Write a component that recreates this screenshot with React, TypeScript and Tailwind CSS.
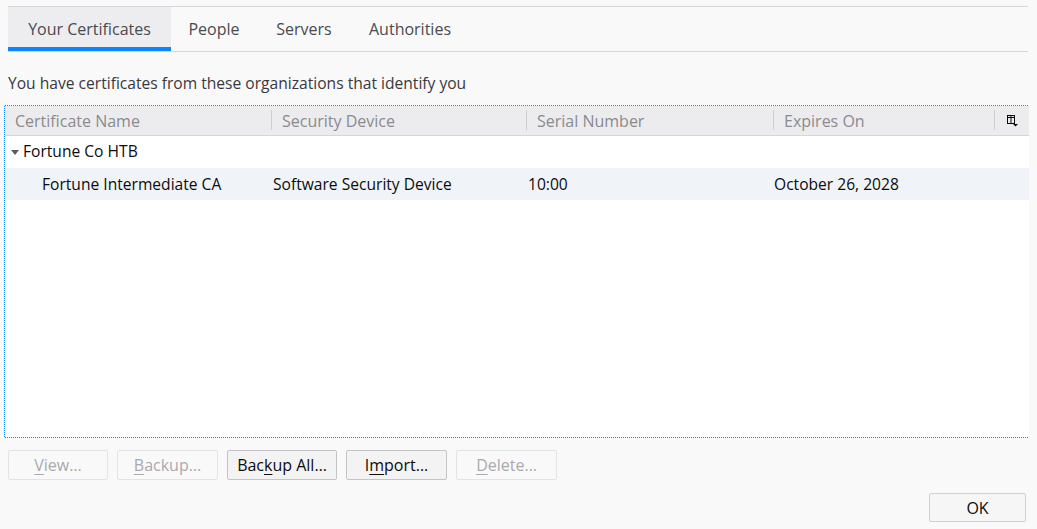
import React from "react";

const font = { fontFamily: '"Open Sans", "Noto Sans", sans-serif' };

function Tab({ label, width, active }: { label: string; width: string; active?: boolean }) {
  return (
    <div
      className={`${width} h-[44px] flex items-center justify-center text-[16px] text-[#4a4a4f] ${
        active ? "bg-[#ededf0] border-b-[4px] border-[#0a84ff] pt-[4px]" : ""
      }`}
    >
      {label}
    </div>
  );
}

function HeaderCell({ label, width, sep = true }: { label: string; width: string; sep?: boolean }) {
  return (
    <div className={`${width} h-full flex items-center relative`}>
      <span className="pl-[10px] text-[16px] text-[#8a8a8f]">{label}</span>
      {sep && <div className="absolute right-0 top-[4px] h-[20px] w-px bg-[#cfcfd3]" />}
    </div>
  );
}

function Btn({
  width,
  pre,
  u,
  post,
  disabled,
}: {
  width: string;
  pre: string;
  u: string;
  post: string;
  disabled?: boolean;
}) {
  return (
    <div
      className={`${width} h-[30px] rounded-[2px] border flex items-center justify-center text-[16px] ${
        disabled
          ? "border-[#e3e3e5] bg-[#f9f9fa] text-[#a9a9ad]"
          : "border-[#c4c4c8] bg-[#f3f3f4] text-[#0c0c0d]"
      }`}
    >
      <span>
        {pre}
        <span className="underline underline-offset-[3px]">{u}</span>
        {post}
      </span>
    </div>
  );
}

export default function App() {
  return (
    <div className="w-[1037px] h-[529px] bg-[#f9f9fa] flex flex-col overflow-hidden" style={font}>
      {/* tab bar */}
      <div className="mt-[6px] ml-[8px] w-[1020px] h-[46px] border-y border-[#d7d7db] flex">
        <Tab label="Your Certificates" width="w-[163px]" active />
        <Tab label="People" width="w-[86px]" />
        <Tab label="Servers" width="w-[94px]" />
        <Tab label="Authorities" width="w-[118px]" />
      </div>

      {/* description */}
      <div className="mt-[21px] ml-[8px] h-[20px] leading-[20px] text-[15.6px] text-[#38383d]">
        You have certificates from these organizations that identify you
      </div>

      {/* tree with dotted focus ring */}
      <div className="mt-[12px] ml-[4px] w-[1025px] h-[333px] flex pt-px pl-px pb-px bg-[conic-gradient(#0a84ff_25%,#ffffff_0_50%,#0a84ff_0_75%,#ffffff_0)] bg-size-[2px_2px]">
        <div className="flex-1 bg-white flex flex-col">
          <div className="h-[30px] bg-[#ececee] border-b border-[#d7d7db] flex">
            <HeaderCell label="Certificate Name" width="w-[267px]" />
            <HeaderCell label="Security Device" width="w-[255px]" />
            <HeaderCell label="Serial Number" width="w-[247px]" />
            <HeaderCell label="Expires On" width="w-[221px]" />
            <div className="flex-1 flex items-center justify-center pl-[2px]">
              <svg width="12" height="12" viewBox="0 0 12 12">
                <rect x="0.5" y="0.5" width="7" height="8" fill="none" stroke="#0c0c0d" strokeWidth="1" />
                <line x1="0.5" y1="2.5" x2="7.5" y2="2.5" stroke="#0c0c0d" strokeWidth="1" />
                <line x1="4" y1="0.5" x2="4" y2="8.5" stroke="#0c0c0d" strokeWidth="1" />
                <polygon points="6,9 11,9 8.5,11.5" fill="#0c0c0d" />
              </svg>
            </div>
          </div>
          <div className="h-[32px] flex items-center text-[15.6px] text-[#0c0c0d]">
            <svg width="8" height="5" viewBox="0 0 8 5" className="ml-[6px] mr-[4px]">
              <polygon points="0,0 8,0 4,5" fill="#5c5c5f" />
            </svg>
            <span>Fortune Co HTB</span>
          </div>
          <div className="h-[32px] pt-[1px] flex items-center text-[15.6px] text-[#0c0c0d] bg-[#f0f4f9]">
            <div className="w-[267px] pl-[37px]">Fortune Intermediate CA</div>
            <div className="w-[255px] pl-[1px]">Software Security Device</div>
            <div className="w-[247px] pl-[1px]">10:00</div>
            <div className="w-[221px] pl-[0px]">October 26, 2028</div>
          </div>
        </div>
      </div>

      {/* buttons */}
      <div className="mt-[12px] ml-[8px] flex gap-[9px]">
        <Btn width="w-[100px]" pre="" u="V" post="iew…" disabled />
        <Btn width="w-[101px]" pre="" u="B" post="ackup…" disabled />
        <Btn width="w-[110px]" pre="Bac" u="k" post="up All…" />
        <Btn width="w-[101px]" pre="I" u="m" post="port…" />
        <Btn width="w-[101px]" pre="" u="D" post="elete…" disabled />
      </div>

      <div className="mt-[13px] ml-[929px]">
        <div className="w-[97px] h-[29px] rounded-[2px] border border-[#d0d0d4] bg-[#f6f6f7] flex items-center justify-center text-[16px] text-[#0c0c0d]">
          OK
        </div>
      </div>
    </div>
  );
}
